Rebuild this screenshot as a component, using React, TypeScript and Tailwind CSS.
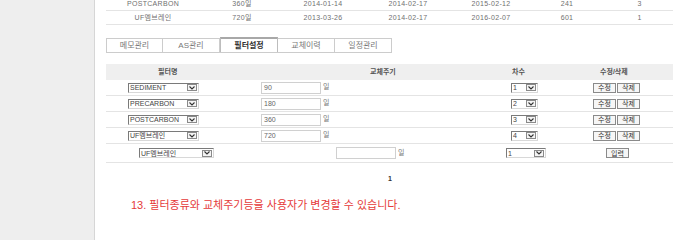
import React from "react";

const FONT = { fontFamily: '"Liberation Sans", "Noto Sans CJK KR", sans-serif' };

function Sel({ cls, label }: { cls: string; label: string }) {
  return (
    <div className={"flex h-[10px] items-center border border-t-[#7a7a7a] border-l-[#7a7a7a] border-b-[#d8d8d8] border-r-[#d8d8d8] bg-white " + cls}>
      <span className="flex-1 pl-[1px] text-[7px] leading-none text-[#444] overflow-hidden whitespace-nowrap">{label}</span>
      <span className="mr-[1px] flex h-[7px] w-[10px] items-center justify-center border border-[#8a8a8a] bg-[#f4f4f4]">
        <svg width="6" height="4" viewBox="0 0 6 4">
          <path d="M0.5 0.5 L3 3 L5.5 0.5" fill="none" stroke="#333" strokeWidth="1.1" />
        </svg>
      </span>
    </div>
  );
}

function Btn({ label }: { label: string }) {
  return (
    <div className="flex h-[10px] w-[23px] items-center justify-center border border-[#8a8a8a] bg-[#f6f6f6] text-[7px] leading-none text-[#333]">
      {label}
    </div>
  );
}

function Inp({ value, cls }: { value: string; cls: string }) {
  return (
    <div className={"h-[12px] w-[60px] border border-[#d0d0d0] bg-white pl-[2px] pt-[1px] text-[7px] leading-none text-[#666] " + cls}>
      {value}
    </div>
  );
}

const topRows = [
  ["POSTCARBON", "360일", "2014-01-14", "2014-02-17", "2015-02-12", "241", "3"],
  ["UF멤브레인", "720일", "2013-03-26", "2014-02-17", "2016-02-07", "601", "1"],
];
const topCols = ["w-[94px]", "w-[84px]", "w-[78px]", "w-[92px]", "w-[74px]", "w-[78px]", "w-[67px]"];

const filters = [
  ["SEDIMENT", "90", "1"],
  ["PRECARBON", "180", "2"],
  ["POSTCARBON", "360", "3"],
  ["UF멤브레인", "720", "4"],
];

const tabs = ["메모관리", "AS관리", "필터설정", "교체이력", "일정관리"];

export default function App() {
  return (
    <div className="flex h-[240px] w-[690px] overflow-hidden bg-white" style={FONT}>
      <div className="h-full w-[95px] shrink-0 border-r border-[#d6d6d6] bg-[#eeeeee]" />
      <div className="flex w-[578px] shrink-0 flex-col pl-[11px]">
        {/* top table */}
        <div className="mt-[-3px] flex flex-col">
          {topRows.map((r, i) => (
            <div key={i} className="flex h-[14px] border-b border-[#e4e4e4]">
              {r.map((c, j) => (
                <div key={j} className={"flex items-center justify-center text-[7px] leading-none tracking-[0.3px] text-[#707070] " + topCols[j]}>
                  {c}
                </div>
              ))}
            </div>
          ))}
        </div>

        {/* tabs */}
        <div className="mt-[13px] flex">
          <div className="flex w-[286px] border-b border-[#cccccc]">
            {tabs.map((t, i) =>
              i === 2 ? (
                <div key={t} className="mb-[-1px] mt-[-1px] flex h-[15px] w-[58px] items-center justify-center border-x border-t-2 border-[#bdbdbd] border-t-[#a8a8a8] bg-white text-[8px] font-bold text-[#333]">
                  {t}
                </div>
              ) : (
                <div key={t} className={"flex h-[14px] w-[57px] items-center justify-center border-t border-[#cccccc] bg-white text-[8px] text-[#777] " + (i === 0 ? "border-l border-r " : "border-r ")}>
                  {t}
                </div>
              )
            )}
          </div>
        </div>

        {/* filter table */}
        <div className="mt-[11px] flex flex-col">
          <div className="flex h-[16px] items-center bg-[#efefef] text-[7px] font-bold text-[#555]">
            <div className="w-[144px] pl-[52px]">필터명</div>
            <div className="w-[250px] pl-[120px]">교체주기</div>
            <div className="w-[60px] pl-[12px]">차수</div>
            <div className="w-[113px] pl-[40px]">수정/삭제</div>
          </div>
          {filters.map((f) => (
            <div key={f[0]} className="flex h-[16px] items-center border-b border-[#e4e4e4]">
              <div className="w-[144px] pl-[22px]">
                <Sel cls="w-[71px]" label={f[0]} />
              </div>
              <div className="flex w-[250px] items-center pl-[11px]">
                <Inp value={f[1]} cls="" />
                <span className="ml-[2px] text-[7px] text-[#777]">일</span>
              </div>
              <div className="w-[60px] pl-[11px]">
                <Sel cls="w-[27px]" label={f[2]} />
              </div>
              <div className="flex w-[113px] gap-[1px] pl-[33px]">
                <Btn label="수정" />
                <Btn label="삭제" />
              </div>
            </div>
          ))}
          <div className="flex h-[19px] items-center border-b border-[#e4e4e4]">
            <div className="w-[144px] pl-[33px]">
              <Sel cls="w-[75px]" label="UF멤브레인" />
            </div>
            <div className="flex w-[250px] items-center pl-[86px]">
              <Inp value="" cls="" />
              <span className="ml-[2px] text-[7px] text-[#777]">일</span>
            </div>
            <div className="w-[60px] pl-[6px]">
              <Sel cls="w-[40px]" label="1" />
            </div>
            <div className="flex w-[113px] pl-[46px]">
              <Btn label="입력" />
            </div>
          </div>
        </div>

        <div className="mt-[12px] pl-[282px] text-[7px] font-bold leading-none text-[#333]">1</div>

        <div className="mt-[18px] pl-[25px] text-[11px] leading-none text-[#e53a3a]">
          13. 필터종류와 교체주기등을 사용자가 변경할 수 있습니다.
        </div>
      </div>
    </div>
  );
}
